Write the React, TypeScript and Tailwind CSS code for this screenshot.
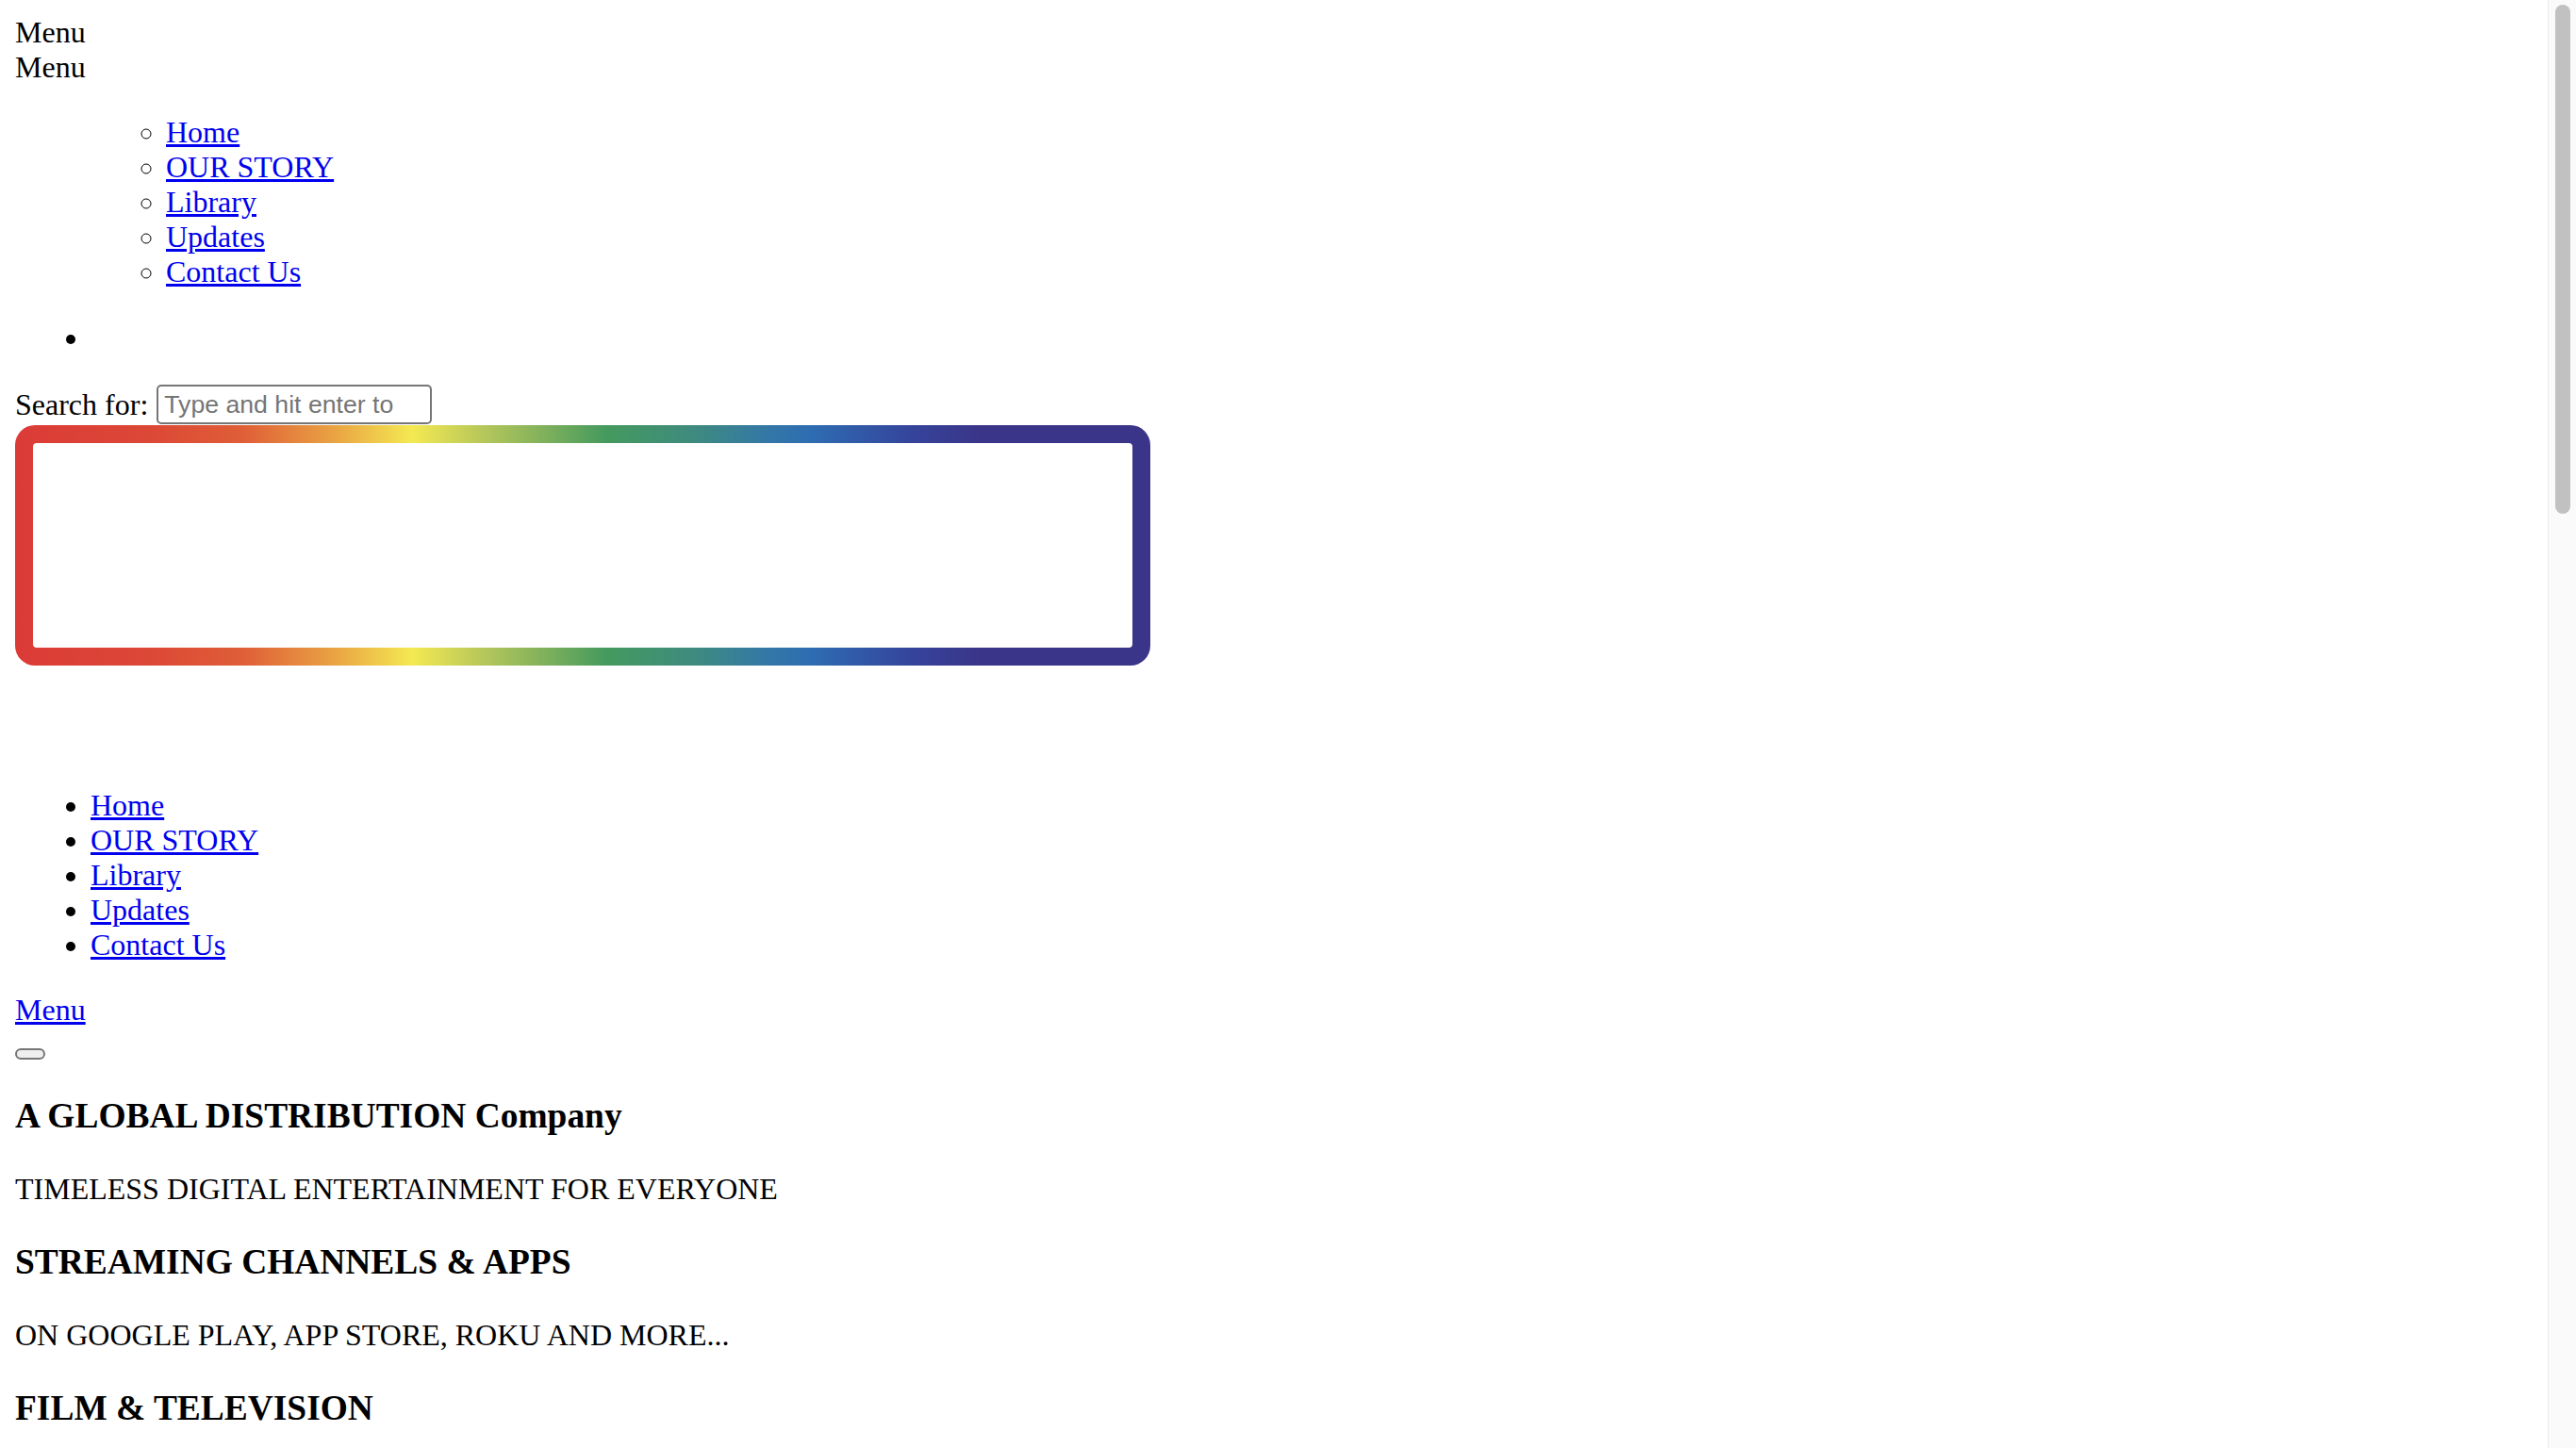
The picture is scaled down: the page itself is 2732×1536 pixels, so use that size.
import React from 'react';

const navLinks = ['Home', 'OUR STORY', 'Library', 'Updates', 'Contact Us'];

const sections = [
    { title: 'A GLOBAL DISTRIBUTION Company', text: 'TIMELESS DIGITAL ENTERTAINMENT FOR EVERYONE' },
    { title: 'STREAMING CHANNELS & APPS', text: 'ON GOOGLE PLAY, APP STORE, ROKU AND MORE...' },
    { title: 'FILM & TELEVISION', text: '' },
];

const NavLink: React.FC<{ label: string }> = ({ label }) => (
    <a href="#" className="text-[#0000ee] underline">{label}</a>
);

export default function App() {
    return (
        <div className="flex h-screen w-full overflow-hidden bg-white text-black font-['Liberation_Serif','Times_New_Roman',serif] text-[32px] leading-[normal]">
            <main className="flex-1 p-[16px]">
                <div>Menu</div>
                <div>Menu</div>

                <ul className="mt-[32px] pl-[80px]">
                    <li className="list-none">
                        <ul className="list-[circle] pl-[80px]">
                            {navLinks.map((l) => (
                                <li key={l}><NavLink label={l} /></li>
                            ))}
                        </ul>
                    </li>
                    <li className="list-disc mt-[33px]">{'\u00a0'}</li>
                </ul>

                {/* search form */}
                <div className="mt-[31px] flex h-[42px] items-center gap-[9px]">
                    <label>Search for:</label>
                    <input
                        type="text"
                        placeholder="Type and hit enter to"
                        className="h-[42px] w-[292px] rounded-[5px] border-2 border-[#767676] bg-white pl-[6px] font-['Liberation_Sans',Arial,sans-serif] text-[26.67px] placeholder:text-[#757575] outline-none"
                    />
                </div>

                {/* logo frame */}
                <div className="mt-[1px] h-[255px] w-[1204px] rounded-[21px] p-[19px] bg-[linear-gradient(90deg,#db3b37_0%,#dc4836_12%,#df5e37_20%,#e9a243_28%,#f4e952_35%,#b8c85a_41%,#7caf5c_47%,#459a5e_52%,#3e8a80_60%,#3478a5_66%,#2e6db2_70%,#35449a_79%,#3a3589_85%,#3a3589_100%)]">
                    <div className="h-full w-full rounded-[4px] bg-white" />
                </div>

                <ul className="mt-[130px] list-disc pl-[80px]">
                    {navLinks.map((l) => (
                        <li key={l}><NavLink label={l} /></li>
                    ))}
                </ul>

                <div className="mt-[32px]"><NavLink label="Menu" /></div>
                <div className="h-[35px] pt-[22px]">
                    <button className="block h-[12px] w-[32px] rounded-[6px] border-2 border-[#767676] bg-[#efefef]" />
                </div>

                <div>
                    {sections.map((s) => (
                        <React.Fragment key={s.title}>
                            <h3 className="my-[37.44px] text-[37.44px] font-bold">{s.title}</h3>
                            {s.text && <p className="my-[32px]">{s.text}</p>}
                        </React.Fragment>
                    ))}
                </div>
            </main>

            {/* scrollbar */}
            <div className="w-[30px] shrink-0 border-l border-[#ebebeb] bg-[#fafafa]">
                <div className="ml-[7px] mt-[5px] h-[540px] w-[16px] rounded-full bg-[#c1c1c1]" />
            </div>
        </div>
    );
}
